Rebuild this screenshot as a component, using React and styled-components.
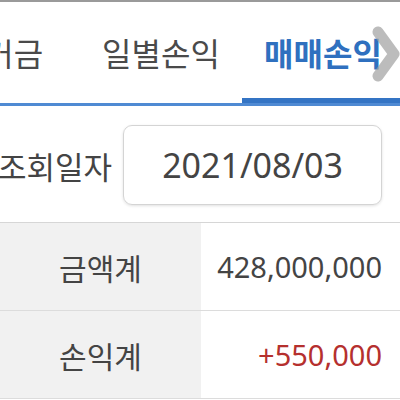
import styled, { createGlobalStyle } from "styled-components";

const GlobalStyle = createGlobalStyle`
    html, body { margin: 0; padding: 0; background: #fff; overflow: hidden; }
    body { font-family: "Noto Sans", "Noto Sans CJK KR", sans-serif; color: #444; }
`;

const Screen = styled.div`
    width: 400px; height: 400px; overflow: hidden; background: #fff;
`;

// 상단 구분선
const TopRule = styled.div`
    height: 2px; background: #9a9a9a;
`;

// 탭 바
const TabBar = styled.div`
    position: relative; height: 101px; overflow: hidden;
    border-bottom: 3px solid #4f8ad3;
`;

const TabStrip = styled.div`
    display: flex; height: 100%; margin-left: -82px;
`;

const Tab = styled.div`
    position: relative; flex: 0 0 162px;
    display: flex; align-items: center; justify-content: center;
    font-size: 32px; white-space: nowrap; padding-bottom: 2px;
    color: ${props => props.active ? "#2f70bf" : "#4a4a4a"};
    font-weight: ${props => props.active ? "bold" : "normal"};
    &::after {
        content: ""; position: absolute; left: 0; right: 0; bottom: 0;
        height: 5px; background: ${props => props.active ? "#3474c4" : "transparent"};
    }
`;

const NextArrow = styled.div`
    position: absolute; right: 0; top: 23px; width: 30px; height: 58px;
`;

// 조회일자
const SearchRow = styled.div`
    display: flex; align-items: center; gap: 11px;
    padding: 19px 0 17px;
`;

const Label = styled.span`
    font-size: 31px; margin-left: -2px; white-space: nowrap;
`;

const DateBox = styled.div`
    width: 257px; height: 78px; box-sizing: content-box;
    border: 1px solid #d4d4d4; border-radius: 9px;
    box-shadow: 0 1px 3px rgba(0,0,0,0.12);
    display: flex; align-items: center; justify-content: center;
    font-size: 34px; color: #444;
`;

// 합계 테이블
const Table = styled.div`
    border-top: 1px solid #d6d6d6;
`;

const Row = styled.div`
    display: grid; grid-template-columns: 201px 1fr;
    height: 87px; border-bottom: 1px solid #dcdcdc;
`;

const HeadCell = styled.div`
    background: #f1f1f1; display: flex; align-items: center; justify-content: center;
    font-size: 30px; color: #444;
`;

const ValueCell = styled.div`
    display: flex; align-items: center; justify-content: flex-end;
    padding-right: 18px; font-size: 29px;
    color: ${props => props.tone === "up" ? "#b5302e" : "#444"};
`;

const TABS = ["증거금", "일별손익", "매매손익"];

const SUMMARY = [
    { label: "금액계", value: "428,000,000" },
    { label: "손익계", value: "+550,000", tone: "up" }
];

export default function App() {
    return (
        <Screen>
            <GlobalStyle />
            <TopRule />
            <TabBar>
                <TabStrip>
                    {TABS.map((t) => (
                        <Tab key={t} active={t === "매매손익"}>{t}</Tab>
                    ))}
                </TabStrip>
                <NextArrow>
                    <svg width="30" height="58" viewBox="0 0 30 58">
                        <polyline points="8,7 24,29 8,51" fill="none" stroke="rgba(160,160,160,0.7)" strokeWidth="11" strokeLinecap="round" strokeLinejoin="round" />
                    </svg>
                </NextArrow>
            </TabBar>

            <SearchRow>
                <Label>조회일자</Label>
                <DateBox>2021/08/03</DateBox>
            </SearchRow>

            <Table>
                {SUMMARY.map((r) => (
                    <Row key={r.label}>
                        <HeadCell>{r.label}</HeadCell>
                        <ValueCell tone={r.tone}>{r.value}</ValueCell>
                    </Row>
                ))}
            </Table>
        </Screen>
    );
}
